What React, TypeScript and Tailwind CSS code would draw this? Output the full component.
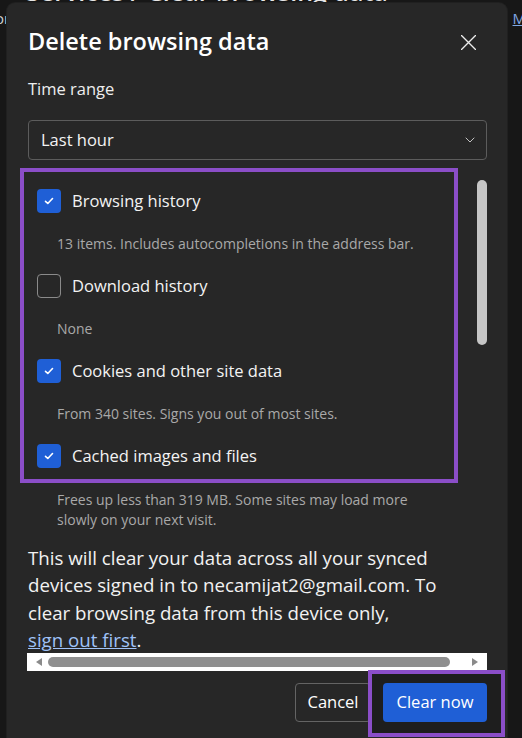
import { ChevronDown } from "lucide-react";

const items = [
  {
    label: "Browsing history",
    sub: "13 items. Includes autocompletions in the address bar.",
    checked: true,
  },
  { label: "Download history", sub: "None", checked: false },
  {
    label: "Cookies and other site data",
    sub: "From 340 sites. Signs you out of most sites.",
    checked: true,
  },
];

function Checkbox({ checked }: { checked: boolean }) {
  if (!checked) {
    return (
      <span className="h-[24px] w-[24px] shrink-0 rounded-[4px] border border-[#8a8a8a]" />
    );
  }
  return (
    <span className="grid h-[24px] w-[24px] shrink-0 place-items-center rounded-[4px] bg-[#1f5fd6]">
      <svg width="12" height="12" viewBox="0 0 12 12" fill="none">
        <path
          d="M2.5 6.3l2.3 2.2 4.7-5"
          stroke="white"
          strokeWidth="1.6"
          strokeLinecap="round"
          strokeLinejoin="round"
        />
      </svg>
    </span>
  );
}

function Row({ label, checked }: { label: string; checked: boolean }) {
  return (
    <div className="flex h-[42px] items-center gap-[11px] pl-[13px]">
      <Checkbox checked={checked} />
      <span className="text-[16.5px] text-[#f3f3f3]">{label}</span>
    </div>
  );
}

export default function App() {
  return (
    <div className="relative h-[738px] w-[522px] overflow-hidden bg-[#171717] font-['Open_Sans',sans-serif]">
      {/* page behind the dialog */}
      <div className="-mt-[24px] pl-[26px] text-[25px] leading-[30px] font-semibold text-[#e6e6e6]">
        Services / Clear browsing data
      </div>
      <div className="mt-[2px] flex justify-between text-[15px] leading-[20px]">
        <span className="-ml-[5px] text-[#cfcfcf]">or</span>
        <span className="mr-[-4px] text-[#7fa8e6] underline">M</span>
      </div>

      {/* dialog */}
      <div className="absolute left-[7px] top-[3px] flex h-[780px] w-[500px] flex-col rounded-[8px] bg-[#272727] pl-[21px] pr-[20px] pt-[20px] shadow-[0_0_0_1px_#202020]">
        <div className="flex h-[38px] items-center justify-between">
          <h2 className="text-[23.5px] font-semibold text-white">Delete browsing data</h2>
          <button className="mr-[3px] grid h-[32px] w-[32px] place-items-center">
            <svg width="15" height="15" viewBox="0 0 15 15">
              <path
                d="M0.5 0.5l14 14M14.5 0.5l-14 14"
                stroke="#ececec"
                strokeWidth="1.4"
                strokeLinecap="round"
              />
            </svg>
          </button>
        </div>

        <div className="mt-[14px] flex h-[28px] items-center text-[16.5px] text-[#eeeeee]">
          Time range
        </div>

        <div className="mt-[17px] flex h-[40px] items-center justify-between rounded-[4px] border border-[#5c5c5c] pl-[12px] pr-[8px]">
          <span className="text-[16.5px] text-[#f3f3f3]">Last hour</span>
          <ChevronDown size={16} strokeWidth={1.4} className="text-[#cfcfcf]" />
        </div>

        {/* scrollable list */}
        <div className="-ml-[8px] mt-[8px] flex">
          <div className="w-[438px]">
            <div className="border-4 border-[#8b4ec8] pb-[2px] pt-[8px]">
              {items.map((it) => (
                <div key={it.label}>
                  <Row label={it.label} checked={it.checked} />
                  <div className="flex h-[43px] items-center pl-[33px] text-[14px] text-[#a9a9a9]">
                    {it.sub}
                  </div>
                </div>
              ))}
              <Row label="Cached images and files" checked />
            </div>
            <p className="mt-[7px] pl-[37px] text-[14px] leading-[20px] text-[#a9a9a9]">
              Frees up less than 319 MB. Some sites may load more
              <br />
              slowly on your next visit.
            </p>
          </div>
          <div className="ml-auto pt-[12px]">
            <div className="h-[165px] w-[10px] rounded-full bg-[#c6c6c6]" />
          </div>
        </div>

        <p className="mt-[14px] w-[450px] text-[18.7px] leading-[27.3px] text-[#f2f2f2]">
          This will clear your data across all your synced devices signed in to
          necamijat2@gmail.com. To clear browsing data from this device only,{" "}
          <span className="whitespace-nowrap">
            <a className="text-[#9fc2f7] underline">sign out first</a>.
          </span>
        </p>

        {/* horizontal scrollbar */}
        <div className="-ml-[1px] flex h-[18px] items-center gap-[6px] bg-white px-[9px]">
          <svg width="6" height="8" viewBox="0 0 6 8">
            <path d="M6 0v8L0 4z" fill="#8a8a8a" />
          </svg>
          <div className="h-[10px] w-[402px] rounded-full bg-[#8f8f8f]" />
          <svg width="6" height="8" viewBox="0 0 6 8" className="ml-auto">
            <path d="M0 0v8l6-4z" fill="#8a8a8a" />
          </svg>
        </div>

        <div className="mt-[12px] flex justify-end gap-[12px]">
          <button className="h-[39px] w-[76px] rounded-[4px] border border-[#646464] text-[16.5px] text-white">
            Cancel
          </button>
          <div className="relative">
            <div className="absolute -bottom-[15px] -left-[15px] -right-[18px] -top-[13px] border-4 border-[#8b4ec8] bg-[#1e1e1e]" />
            <button className="relative h-[39px] w-[104px] rounded-[4px] bg-[#1f5fd6] text-[16.5px] text-white">
              Clear now
            </button>
          </div>
        </div>
      </div>
    </div>
  );
}
